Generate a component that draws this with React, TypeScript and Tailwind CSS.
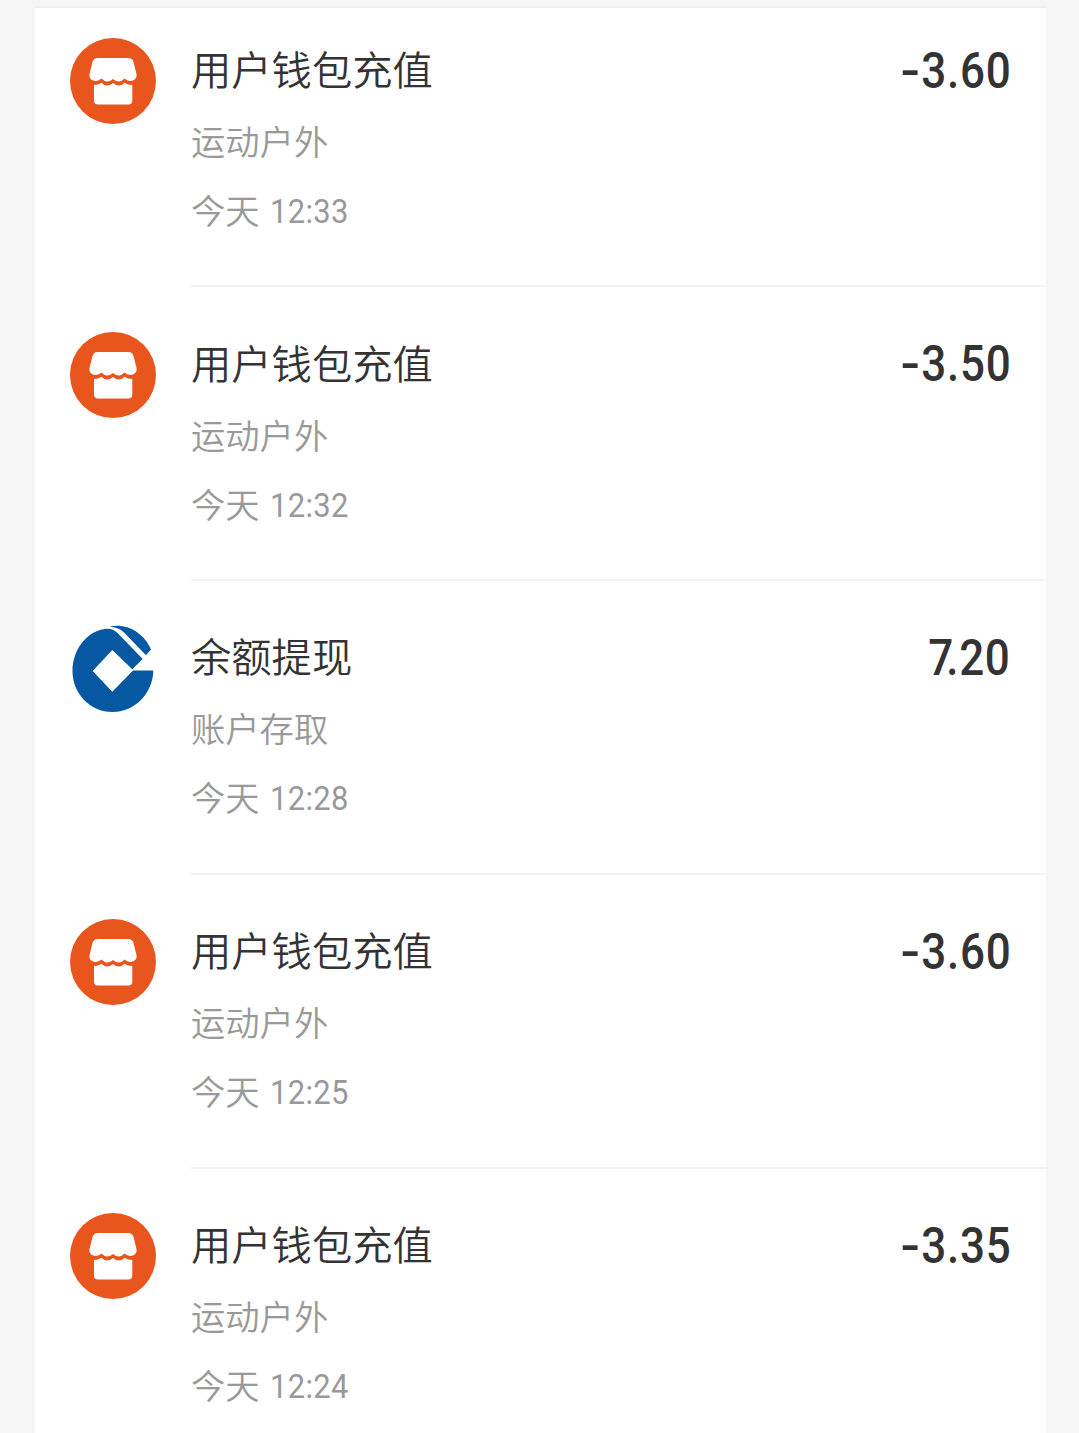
import React from 'react';

type Brand = 'shop' | 'bank';

interface Transaction {
  title: string;
  category: string;
  time: string;
  amount: string;
  brand: Brand;
}

const transactions: Transaction[] = [
  { title: '用户钱包充值', category: '运动户外', time: '12:33', amount: '-3.60', brand: 'shop' },
  { title: '用户钱包充值', category: '运动户外', time: '12:32', amount: '-3.50', brand: 'shop' },
  { title: '余额提现', category: '账户存取', time: '12:28', amount: '7.20', brand: 'bank' },
  { title: '用户钱包充值', category: '运动户外', time: '12:25', amount: '-3.60', brand: 'shop' },
  { title: '用户钱包充值', category: '运动户外', time: '12:24', amount: '-3.35', brand: 'shop' },
];

const ShopIcon: React.FC = () => (
  <svg viewBox="0 0 86 86" className="block size-[86px]">
    <circle cx="43" cy="43" r="43" fill="#e8551d" />
    <path
      fill="#fff"
      d="M28 20H58Q62.5 20 63.5 24L66.5 36C67.5 40.5 63.5 43 60 43Q57 42.8 54.5 40.5Q51.5 43.5 49 43.5Q46 43.5 43 41Q40 43.5 37 43.5Q34.5 43.5 31.5 40.5Q29 42.8 26 43C22.5 43 18.5 40.5 19.5 36L22.5 24Q23.5 20 28 20Z"
    />
    <path
      fill="#fff"
      d="M24 47Q28.5 47 31.5 44.8Q34 47.5 37 47.5Q40 47.5 43 45Q46 47.5 49 47.5Q52 47.5 54.5 44.8Q57.5 47 62.3 47V62.5Q62.3 66.5 58.3 66.5H28Q24 66.5 24 62.5Z"
    />
  </svg>
);

const BankIcon: React.FC = () => (
  <svg viewBox="0 0 86 88" className="-mt-[2px] block h-[88px] w-[86px]">
    <path
      fill="#0758a2"
      d="M32 5.5C38 4.2 43 4.3 48 9.5L72.7 35L62.3 45.3L42.3 26L22.7 47L42.3 67.7L63 46.5H83.3C83 69 65 88 42.5 88C20 88 2.5 69.5 2.5 47C2.5 26 16 9 32 5.5Z"
    />
    <path fill="#0758a2" d="M39.5 2.7C55 -1.5 73.5 7.5 81 25.5L76 31.3L54 8.5C49.5 4 45 3.3 39.5 2.7Z" />
  </svg>
);

const Amount: React.FC<{ value: string }> = ({ value }) => {
  const negative = value.startsWith('-');
  const [whole, cents] = value.replace('-', '').split('.');

  return (
    <div className="flex font-['Roboto',sans-serif] text-[50px] font-medium leading-[63px] text-[#333]">
      {negative && <span className="mr-[-11px] origin-right scale-x-[1.15]">-</span>}
      <span className="origin-right scale-x-[0.88] tracking-[0.8px]">
        {/* the dot tucks in under a 7 */}
        <span className={whole === '7' ? 'tracking-[-8px]' : ''}>{whole}</span>.{cents}
      </span>
    </div>
  );
};

const TransactionRow: React.FC<{ item: Transaction }> = ({ item }) => (
  <li className="flex h-[293.75px] pl-[35px]">
    <div className="w-[121px] shrink-0 pt-[44.5px]">
      {item.brand === 'shop' ? <ShopIcon /> : <BankIcon />}
    </div>
    <div className="flex flex-1 justify-between border-b-2 border-[#f3f3f3] pr-[35px] pt-[46px]">
      <div className="-mt-[1.75px] font-[350]">
        <h3 className="text-[40.3px] leading-[60px] text-[#333]">{item.title}</h3>
        <p className="mt-[12px] text-[34.3px] leading-[60px] text-[#999]">{item.category}</p>
        <p className="mt-[9px] flex text-[34.3px] leading-[60px] text-[#999]">
          今天
          <span className="ml-[10px] mt-[2px] origin-left scale-x-[0.91] font-['Roboto',sans-serif] text-[34px] font-normal tracking-[0.4px]">
            {item.time}
          </span>
        </p>
      </div>
      <Amount value={item.amount} />
    </div>
  </li>
);

const App: React.FC = () => (
  <div className="h-[1433px] overflow-hidden bg-[#f5f5f5] pl-[35px] pr-[33px] font-['Noto_Sans_CJK_SC',sans-serif]">
    <div className="h-[8px] border-b-2 border-[#efefef]" />
    <ul className="flow-root bg-white [&>li:first-child]:-mt-[14.5px]">
      {transactions.map((item) => (
        <TransactionRow key={item.time} item={item} />
      ))}
    </ul>
  </div>
);

export default App;
